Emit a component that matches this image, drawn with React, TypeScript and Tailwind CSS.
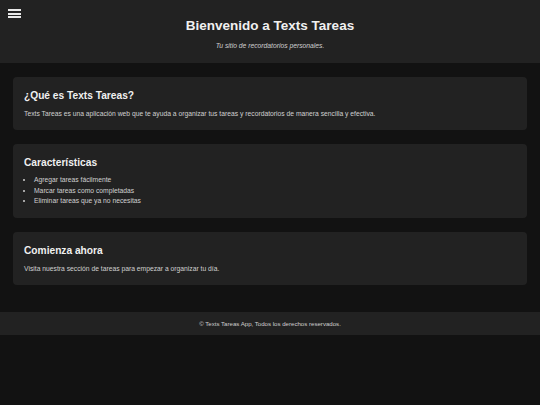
export default function App() {
  return (
    <div
      className="min-h-[405px] bg-[#121212] text-[#e0e0e0]"
      style={{ fontFamily: '"Liberation Sans", Arial, sans-serif' }}
    >
      {/* Header */}
      <header className="relative h-[63px] bg-[#222222] text-center">
        <button className="absolute left-[8px] top-[9px] flex w-[13px] flex-col gap-[1.5px]" aria-label="menu">
          <span className="h-[2px] w-full bg-[#e8e8e8]" />
          <span className="h-[2px] w-full bg-[#e8e8e8]" />
          <span className="h-[2px] w-full bg-[#e8e8e8]" />
        </button>
        <h1 className="pt-[16.5px] text-[13.5px] font-bold leading-[17px] text-[#f0f0f0]">
          Bienvenido a Texts Tareas
        </h1>
        <p className="mt-[8px] text-[6.75px] italic leading-[8px] text-[#cfcfcf]">
          Tu sitio de recordatorios personales.
        </p>
      </header>

      {/* Content */}
      <main className="flex flex-col gap-[13.5px] px-[13px] pt-[14px] pb-[27px]">
        <section className="rounded-[4px] bg-[#222222] px-[11px] pt-[12px] pb-[12px]">
          <h2 className="text-[10.2px] font-bold leading-[14px] text-[#f0f0f0]">¿Qué es Texts Tareas?</h2>
          <p className="mt-[7px] text-[6.75px] leading-[8px] text-[#d0d0d0]">
            Texts Tareas es una aplicación web que te ayuda a organizar tus tareas y recordatorios de manera
            sencilla y efectiva.
          </p>
        </section>

        <section className="rounded-[4px] bg-[#222222] px-[11px] pt-[12px] pb-[11px]">
          <h2 className="text-[10.2px] font-bold leading-[14px] text-[#f0f0f0]">Características</h2>
          <ul className="mt-[5.5px] list-disc pl-[10px] text-[6.75px] leading-[10.7px] text-[#d0d0d0]">
            <li>Agregar tareas fácilmente</li>
            <li>Marcar tareas como completadas</li>
            <li>Eliminar tareas que ya no necesitas</li>
          </ul>
        </section>

        <section className="rounded-[4px] bg-[#222222] px-[11px] pt-[12px] pb-[12px]">
          <h2 className="text-[10.2px] font-bold leading-[14px] text-[#f0f0f0]">Comienza ahora</h2>
          <p className="mt-[7px] text-[6.75px] leading-[8px] text-[#d0d0d0]">
            Visita nuestra sección de tareas para empezar a organizar tu día.
          </p>
        </section>
      </main>

      {/* Footer */}
      <footer className="flex h-[23.5px] items-center justify-center bg-[#222222] text-[6.1px] text-[#cfcfcf]">
        © Texts Tareas App, Todos los derechos reservados.
      </footer>
    </div>
  );
}
